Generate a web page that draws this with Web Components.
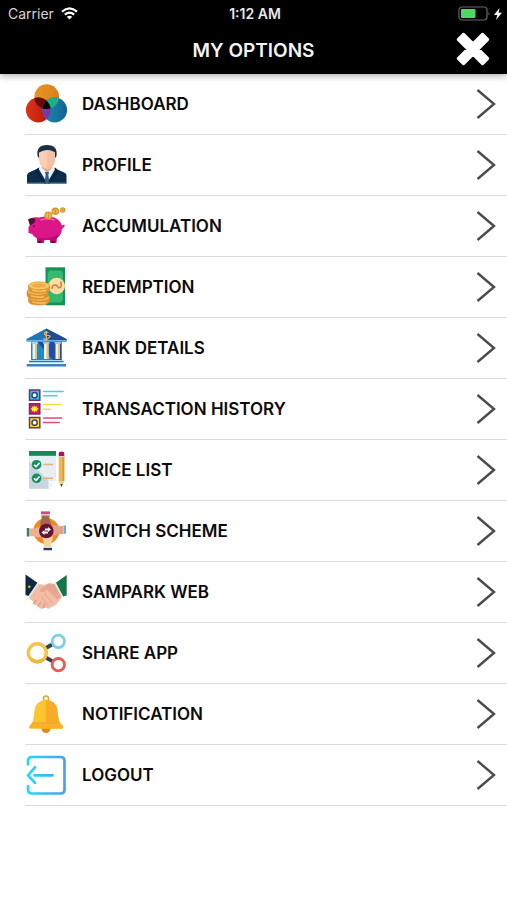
<!DOCTYPE html>
<html lang="en">
<head>
<meta charset="utf-8">
<meta name="viewport" content="width=device-width, initial-scale=1">
<title>My Options</title>
<style>
  body { margin: 0; background: #fff; color: #0b0b0b; font-family: Inter, "Liberation Sans", sans-serif; }
</style>
</head>
<body>
<options-screen>
  <status-bar slot="header" carrier="Carrier" time="1:12 AM"></status-bar>
  <title-bar slot="header">MY OPTIONS</title-bar>

  <option-row href="#dashboard">DASHBOARD
    <svg slot="icon" viewBox="0 0 44 44">
      <defs>
        <clipPath id="c-top"><circle cx="22.7" cy="14.7" r="12.4"/></clipPath>
        <clipPath id="c-left"><circle cx="14.3" cy="28" r="12.4"/></clipPath>
        <linearGradient id="g-o"><stop stop-color="#e89624"/><stop offset="1" stop-color="#d97f1c"/></linearGradient>
        <linearGradient id="g-r"><stop stop-color="#df3512"/><stop offset="1" stop-color="#b3150c"/></linearGradient>
        <linearGradient id="g-b"><stop stop-color="#1f8bb4"/><stop offset="1" stop-color="#0f6690"/></linearGradient>
      </defs>
      <circle cx="22.7" cy="14.7" r="12.4" fill="url(#g-o)"/>
      <circle cx="14.3" cy="28" r="12.4" fill="url(#g-r)"/>
      <circle cx="30.7" cy="28" r="12.4" fill="url(#g-b)"/>
      <g clip-path="url(#c-top)"><circle cx="14.3" cy="28" r="12.4" fill="#65090b"/><circle cx="30.7" cy="28" r="12.4" fill="#16b184"/></g>
      <g clip-path="url(#c-left)"><circle cx="30.7" cy="28" r="12.4" fill="#7c36a5"/>
        <g clip-path="url(#c-top)"><circle cx="30.7" cy="28" r="12.4" fill="#070b08"/></g></g>
    </svg>
  </option-row>

  <option-row href="#profile">PROFILE
    <svg slot="icon" viewBox="0 0 44 44">
      <path d="M3 40.500V33q0-3 3-4l10-4.500h13l10 4.500q3.500 1 3.500 4v7.500z" fill="#0c2c4c"/>
      <path d="M14.500 25.500l8.500 14.500 8.500-14.500-4-3h-9z" fill="#eef2f4"/>
      <path d="M18 20h10v5l-5 5-5-5z" fill="#e7a88c"/>
      <path d="M13.500 13Q12 2 23 2t9.500 11l-2 3h-15z" fill="#173149"/>
      <path d="M15 9.500q8-5 16 0V17q-1 8-8 9-7-1-8-9z" fill="#fbcdb3"/>
      <path d="M23 7q5 0 8 2.500V17q-1 8-8 9z" fill="#f6c0a6"/>
      <path d="M21 29h4l-.7 3 1.400 8.500h-5.400L21.700 32z" fill="#2c5f87"/>
      <path d="M14.500 25l-2 4 9 11.500M31 25l2.500 4-9 11.500" fill="none" stroke="#092038" stroke-width="1.500"/>
      <path d="M3 40h39.500" stroke="#3d7899"/>
    </svg>
  </option-row>

  <option-row href="#accumulation">ACCUMULATION
    <svg slot="icon" viewBox="0 0 44 44">
      <path d="M5 15q4-2.500 10-1.500 5-1.500 11-1 9 1 12 9l2.500-1v2L38 25q-.5 6-5 9l-.5 5h-6l-.8-3h-5l-1 3h-6.200l-.8-5q-3.500-1.500-4.500-4l-3.700-1v-6l2.500-3z" fill="#dc1688"/>
      <path d="M9 32q12 6 27-2-2 4-4 5l-.3 3.700h-5l-.8-3h-6l-1 3h-5l-.8-4.700z" fill="#b90c70"/>
      <path d="M4 15.500q4-2 7.500-.5L10 19l-4 2.500z" fill="#4a1133"/>
      <path d="M17 16q7-2.500 13 0" stroke="#f35ab1" stroke-width="1.500" fill="none" stroke-linecap="round"/>
      <path d="M13.500 37h4l-.5 2h-3zM27 37h4l-.3 2h-3.500z" fill="#4a1133"/>
      <circle cx="9.800" cy="22.300" r="1" fill="#6c0c46"/>
      <circle cx="24.300" cy="11.500" r="4" fill="#e09a2d"/><circle cx="24.300" cy="11.500" r="2.300" fill="#f6c75d"/>
      <circle cx="31.300" cy="7.300" r="3.800" fill="#dc942d"/><circle cx="31.300" cy="7.300" r="2.100" fill="#f4c35a"/>
      <circle cx="38.700" cy="6" r="2.700" fill="#dc962e"/><circle cx="38.700" cy="6" r="1.400" fill="#f4c55c"/>
      <path d="M24.300 9.500v4M31.300 5.500v3.600M38.700 4.800v2.400" stroke="#b97316" stroke-width=".8"/>
    </svg>
  </option-row>

  <option-row href="#redemption">REDEMPTION
    <svg slot="icon" viewBox="0 0 44 44">
      <path d="M21.500 2.300H41v38H21.500z" fill="#159354"/>
      <path d="M25 5.500h12.500q0 2 1.500 2.500v27q-1.500.5-1.500 2.500H25q0-2-1.500-2.500V8Q25 7.500 25 5.500z" fill="#36b873"/>
      <circle cx="32.700" cy="21" r="8.300" fill="#fbdfa0"/>
      <path d="M28 24q0-4 3-4 2 0 3 2t3-.5q1-2-.5-5" stroke="#dc7041" stroke-width="1.500" fill="none"/>
      <g stroke="#d08a2c" stroke-width=".6">
        <path d="M4.500 33v3q0 4 10.500 4t10.500-4v-3z" fill="#df9130"/><ellipse cx="15" cy="32.500" rx="10.500" ry="3.800" fill="#f4b548"/>
        <path d="M3 27v3q0 4 10.500 4T24 30v-3z" fill="#df9130"/><ellipse cx="13.500" cy="26.500" rx="10.500" ry="3.800" fill="#f4b548"/>
        <path d="M4.500 21v3q0 4 10.500 4t10.500-4v-3z" fill="#e39a38"/><ellipse cx="15" cy="20.800" rx="10.700" ry="4" fill="#fbc65c"/>
      </g>
      <ellipse cx="15" cy="20.500" rx="7" ry="2.200" fill="#edac48"/>
      <path d="M7 30.800q6 2.500 13 .5M8 36.800q7 2.500 14 .5M8 25q7 2.300 14 .3" stroke="#f8cd72" stroke-width="1.200" fill="none"/>
    </svg>
  </option-row>

  <option-row href="#bank">BANK DETAILS
    <svg slot="icon" viewBox="0 0 44 44">
      <path d="M7 15.500h30.500V34H7z" fill="#138dce"/><path d="M13 15.500h24.500V34H29z" fill="#1f4da0"/>
      <path d="M22.300 2.500L42.500 13v2.500h-40V13z" fill="#2375b9"/>
      <path d="M22.300 2.500L42.500 13v2.500H22.300z" fill="#214d94"/>
      <path d="M2.500 14h40v1.500h-40z" fill="#6bb4df"/>
      <path d="M24.500 6.500q-4-1-4 1t3.800 2-.3 3-4-.5M22.300 5v9" fill="none" stroke="#eeb65a" stroke-width="1.200"/>
      <path d="M8.500 17.500h4.500V33H8.500zM20 17.500h4.500V33H20zM31.500 17.500H36V33h-4.500z" fill="#eff1ed"/>
      <path d="M11 17.500h2V33h-2zM22.500 17.500h2V33h-2zM34 17.500h2V33h-2z" fill="#e7c084"/>
      <path d="M7.500 16.800H14M19 16.800h6.500M30.500 16.800H37" stroke="#d8e7ee" stroke-width="1.200"/>
      <path d="M5 34h34.500v3H5z" fill="#a9daf0"/><path d="M2.700 38h39.300v2.500H2.700z" fill="#3f80b8"/><path d="M5 35.500h34.500" stroke="#356fad"/>
    </svg>
  </option-row>

  <option-row href="#history">TRANSACTION HISTORY
    <svg slot="icon" viewBox="0 0 44 44">
      <g stroke="#65366f" stroke-width="1.500">
        <path d="M5.500 3h10.300v10.300H5.500z" fill="#36c5ea"/><path d="M5.500 16.700h10.300V27H5.500z" fill="#d81864"/><path d="M5.500 30.500h10.300v10.300H5.500z" fill="#f5dc28"/>
      </g>
      <circle cx="10.600" cy="8.200" r="2.600" fill="#fff" stroke="#364279" stroke-width="1.500"/>
      <path d="M10.600 18.500l1 1.500 1.700-.7-.1 1.700 1.700.9-1.700.9.100 1.700-1.700-.6-1 1.500-1-1.500-1.700.6.100-1.700-1.700-.9 1.700-.9-.1-1.700 1.700.7z" fill="#ffe52e"/>
      <circle cx="10.600" cy="35.700" r="2.600" fill="#fff" stroke="#4c4261" stroke-width="1.500"/>
      <g fill="none" stroke-width="1.500" stroke-linecap="round">
        <path d="M19.500 4.500h19.700M19.500 8.700H33" stroke="#48cfea"/><path d="M19.500 17.500h17M19.500 22.300H26" stroke="#f2dc3c"/><path d="M19.500 31h18.300M19.500 35.400h15.800" stroke="#dc4b7b"/>
      </g>
    </svg>
  </option-row>

  <option-row href="#prices">PRICE LIST
    <svg slot="icon" viewBox="0 0 44 44">
      <path d="M5 3h27v30l-7.500 7.700H5z" fill="#e5eef1"/><path d="M5 13l23.500 24-4 3.700H5z" fill="#c8d5e1"/>
      <path d="M24.500 40.700V33H32z" fill="#f5f8f8"/>
      <path d="M5 3h27v4.800H5z" fill="#148858"/>
      <circle cx="12.600" cy="16.700" r="4.800" fill="#168f5e"/><circle cx="12.600" cy="30.300" r="4.800" fill="#168f5e"/>
      <path d="M10 16.700l2 2 3.500-3.800M10 30.300l2 2 3.500-3.800" stroke="#fff" stroke-width="1.600" fill="none"/>
      <path d="M19.500 16.500H29M19.500 30.300H29" stroke="#dfb17c" stroke-width="1.500"/>
      <path d="M34.700 8h5.600v25l-2.800 6-2.800-6z" fill="#efb852"/><path d="M38.500 8h1.800v25h-1.800z" fill="#d99b37"/>
      <path d="M34.700 33h5.600l-2.800 6.200z" fill="#ecd0a0"/><path d="M36.300 36h2.400l-1.200 3.200z" fill="#3d4b50"/>
      <path d="M34.700 8V5q0-1.500 2.800-1.500T40.300 5v3z" fill="#a9155a"/><path d="M34.500 8.500h6" stroke="#d5d5d5"/>
    </svg>
  </option-row>

  <option-row href="#scheme">SWITCH SCHEME
    <svg slot="icon" viewBox="0 0 44 44">
      <circle cx="22.300" cy="22" r="13" fill="#ef8b25"/>
      <path d="M17.500 5.500h8v5q2.500 4 1 9h-9q-2.500-5 0-9z" fill="#a66551"/>
      <path d="M5.500 19.500h5q5-2.500 9 0v7q-4 3-9 .8h-5z" fill="#efb096"/>
      <path d="M39 17h-5.500q-6-2-9 2v6q4 2.500 9 0H39z" fill="#e6a28e"/>
      <path d="M20 38v-4.500q-2.500-4-1-9h9q2 5-.7 9V38z" fill="#f4d3a2"/>
      <circle cx="22.300" cy="22" r="7.300" fill="#64162f"/>
      <path d="M17.500 23.500l3-2.500v1.500h3.500v2h-3.500V26zM27 20.500L24 18v1.500h-3v2h3V23z" fill="#fff"/>
      <path d="M17 3.700h9" stroke="#df4181" stroke-width="2.600"/><path d="M4 19v8.500" stroke="#318263" stroke-width="2.500"/>
      <path d="M40.700 16.500v8.300" stroke="#57b4c5" stroke-width="2.500"/><path d="M19.500 40h8.500" stroke="#1f3f5a" stroke-width="2.500"/>
      <path d="M18 6h7.500M21 38h6.500" stroke="#f4dbe1"/>
    </svg>
  </option-row>

  <option-row href="#sampark">SAMPARK WEB
    <svg slot="icon" viewBox="0 0 44 44">
      <path d="M13 13.500l7 1.500 5-2 7 1 6.500 12-3.500 5-2.500 3-2.500 2-3 1-2 1.700-3.500-.7-5 .7-2.500-2.700-4-1.500-1-3.500-3.500-2-.8-4z" fill="#f2bda4"/>
      <path d="M24 14l-7 4.500q-2 2.500.5 3.500 3 .5 6-2.500l10 10 4.500-3.500-5-11.500z" fill="#e5a790"/>
      <path d="M23.500 19.500l9 9M20 23l8.500 10M17 26l7 9.500" stroke="#eaae97" stroke-width="1.300" fill="none"/>
      <path d="M9.500 33.500l2.500-3M14 36.500l2.500-4M19 37.800l1.500-3.500" stroke="#dd9c85" stroke-width="1.400" stroke-linecap="round"/>
      <path d="M1.500 4.500L13.800 13 4.500 26l-3-1z" fill="#10293f"/><path d="M13.500 12.500l1.600 1.300L6 27l-1.500-1z" fill="#dae9ed"/>
      <circle cx="5.300" cy="16.700" r="1.300" fill="#e4b93c"/>
      <path d="M42.700 5L31.500 13l7.500 13.500 3.700-1z" fill="#147445"/><path d="M31.800 12.300L30.300 13.500 37.500 27l1.500-.7z" fill="#d9eee4"/>
    </svg>
  </option-row>

  <option-row href="#share">SHARE APP
    <svg slot="icon" viewBox="0 0 44 44" fill="none">
      <path d="M21 17.500l8-4.500M21 26l8 4.700" stroke="#33434e" stroke-width="3.800"/>
      <circle cx="13.300" cy="21.800" r="9" fill="#fff" stroke="#f4c448" stroke-width="3.400"/>
      <path d="M7 28.200a9 9 0 0 0 12.600 0" stroke="#eeb840" stroke-width="3.400"/>
      <circle cx="34.300" cy="10.300" r="6.200" fill="#fff" stroke="#7dcdf3" stroke-width="2.800"/>
      <circle cx="34.300" cy="33.700" r="6.200" fill="#fff" stroke="#e95b51" stroke-width="2.800"/>
    </svg>
  </option-row>

  <option-row href="#notification">NOTIFICATION
    <svg slot="icon" viewBox="0 0 44 44">
      <circle cx="22" cy="6.500" r="2.600" fill="none" stroke="#e6a32b" stroke-width="1.500"/>
      <circle cx="22" cy="36.500" r="4.500" fill="#e9851e"/>
      <path d="M22 8q10 .5 11.500 10 .5 9 2.500 13l3 3.500q.5 2-2 2H7.300q-2.500 0-2-2L8 31q2-4 2.500-13Q12 8.500 22 8z" fill="#fdc62f"/>
      <path d="M22 8q10 .5 11.500 10 .5 9 2.500 13l3 3.500q.5 2-2 2H22z" fill="#f7ab26"/>
      <path d="M8 31h28l3 3.500q.5 2-2 2H7.300q-2.500 0-2-2z" fill="#f8b12a"/><path d="M8.500 30.800h27" stroke="#f0a627"/>
    </svg>
  </option-row>

  <option-row href="#logout">LOGOUT
    <svg slot="icon" viewBox="0 0 44 44" fill="none">
      <defs><linearGradient id="g-out" gradientUnits="userSpaceOnUse" x1="3" y1="0" x2="42" y2="0"><stop stop-color="#20dcf8"/><stop offset="1" stop-color="#4e9cf0"/></linearGradient></defs>
      <path d="M4 11.500V8q0-4 4-4h28.500q4 0 4 4v28.500q0 4-4 4H8q-4 0-4-4V33M11 14.300L4 22.300l7 7.500M10.500 22.300h18" stroke="url(#g-out)" stroke-width="2.700" stroke-linecap="round" stroke-linejoin="round"/>
    </svg>
  </option-row>
</options-screen>

<script>
class OptionsScreen extends HTMLElement {
  constructor() {
    super();
    this.attachShadow({ mode: "open" }).innerHTML = `
      <style>
        :host { display: block; }
        header { background: #000; color: #fff; box-shadow: 0 1px 8px rgba(0,0,0,.4); }
        nav { display: flex; flex-direction: column; }
      </style>
      <header><slot name="header"></slot></header>
      <nav aria-label="My options"><slot></slot></nav>`;
  }
}

class StatusBar extends HTMLElement {
  constructor() {
    super();
    this.attachShadow({ mode: "open" }).innerHTML = `
      <style>
        :host { display: grid; grid-template-columns: 1fr auto 1fr; align-items: center; height: 27px; padding: 0 5px 0 8px; font-size: 14px; }
        .left, .right { display: flex; align-items: center; gap: 7px; }
        .left { color: #d6d6d6; }
        .right { justify-content: flex-end; gap: 3px; }
        .time { font-weight: 600; color: #e8e8e8; }
        svg { display: block; }
      </style>
      <span class="left"><span class="carrier"></span>
        <svg width="17" height="13" viewBox="0 0 17 13" fill="none" stroke="#fff" stroke-width="2.200">
          <path d="M1 4.600q7.500-6.400 15 0M3.800 7.700q4.700-4 9.400 0"/><path d="M8.500 12.500L5.700 9.800q2.800-2.200 5.600 0z" fill="#fff" stroke="none"/>
        </svg></span>
      <span class="time"></span>
      <span class="right">
        <svg width="33" height="15" viewBox="0 0 33 15">
          <rect x="1" y="1" width="28" height="13" rx="3" fill="none" stroke="#66676a" stroke-width="1.200"/>
          <rect x="3" y="3" width="14.500" height="9" rx="1" fill="#4cd964"/><path d="M30.500 5.500q1.800 2 0 4z" fill="#66676a"/>
        </svg>
        <svg width="8" height="12" viewBox="0 0 8 12"><path d="M5.500 0L0 7h3.300L2 12l6-7.300H4.600z" fill="#fff"/></svg>
      </span>`;
  }
  connectedCallback() {
    this.shadowRoot.querySelector(".carrier").textContent = this.getAttribute("carrier");
    this.shadowRoot.querySelector(".time").textContent = this.getAttribute("time");
  }
}

class TitleBar extends HTMLElement {
  constructor() {
    super();
    this.attachShadow({ mode: "open" }).innerHTML = `
      <style>
        :host { display: grid; grid-template-columns: 1fr auto 1fr; align-items: center; height: 47px; padding: 0 17px; box-sizing: border-box; }
        h1 { grid-column: 2; margin: 0; font-size: 19px; line-height: 24px; font-weight: 600; color: #f4f4f4; }
        button { justify-self: end; display: block; padding: 0 0 3px; border: 0; background: none; cursor: pointer; }
        svg { display: block; width: 34px; height: 34px; }
      </style>
      <h1><slot></slot></h1>
      <button type="button" aria-label="Close">
        <svg viewBox="0 0 34 34"><path d="M7.500 2L17 11.500 26.500 2 32 7.500 22.500 17 32 26.500 26.500 32 17 22.500 7.500 32 2 26.500 11.500 17 2 7.500z" fill="#fff" stroke="#fff" stroke-width="2.500" stroke-linejoin="round"/></svg>
      </button>`;
  }
}

class OptionRow extends HTMLElement {
  constructor() {
    super();
    this.attachShadow({ mode: "open" }).innerHTML = `
      <style>
        :host { display: block; padding-left: 24px; }
        a { display: grid; grid-template-columns: 44px 1fr 20px; column-gap: 14px; align-items: center; height: 60px; padding-right: 11px; color: inherit; text-decoration: none; font-size: 17px; line-height: 24px; font-weight: 600; }
        ::slotted(svg) { display: block; width: 44px; height: 44px; }
        .chevron { display: block; width: 20px; height: 32px; }
        .rule { height: 1px; margin-left: 1px; background: #dcdcdc; }
      </style>
      <a><slot name="icon"></slot><span><slot></slot></span>
        <svg class="chevron" viewBox="0 0 20 32"><path d="M1.500 2L18 16 1.500 30" fill="none" stroke="#4b4b4b" stroke-width="2.400"/></svg></a>
      <div class="rule"></div>`;
  }
  connectedCallback() {
    this.shadowRoot.querySelector("a").setAttribute("href", this.getAttribute("href"));
  }
}

customElements.define("status-bar", StatusBar);
customElements.define("title-bar", TitleBar);
customElements.define("option-row", OptionRow);
customElements.define("options-screen", OptionsScreen);
</script>
</body>
</html>
